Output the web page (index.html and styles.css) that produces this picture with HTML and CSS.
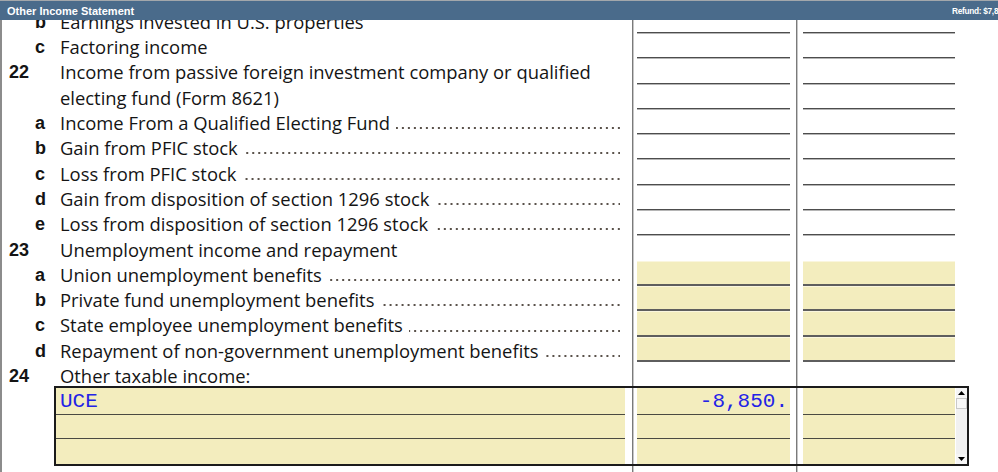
FILE: index.html
```html
<!DOCTYPE html>
<html>
<head>
<meta charset="utf-8">
<title>Other Income Statement</title>
<link rel="stylesheet" href="styles.css">
</head>
<body>
<div class="app">
  <div class="titlebar">
    <span class="title">Other Income Statement</span>
    <span class="refund">Refund: $7,8</span>
  </div>
  <div class="sheet">
    <div class="rows">
      <div class="row">
        <div class="lbl"><span class="num"></span><span class="let">b</span><span class="desc"><span>Earnings invested in U.S. properties</span></span></div>
        <div class="fld"></div><div class="fld fld2"></div>
      </div>
      <div class="row">
        <div class="lbl"><span class="num"></span><span class="let">c</span><span class="desc"><span>Factoring income</span></span></div>
        <div class="fld"></div><div class="fld fld2"></div>
      </div>
      <div class="row">
        <div class="lbl"><span class="num">22</span><span class="let"></span><span class="desc"><span>Income from passive foreign investment company or qualified</span></span></div>
        <div class="fld"></div><div class="fld fld2"></div>
      </div>
      <div class="row">
        <div class="lbl"><span class="num"></span><span class="let"></span><span class="desc"><span>electing fund (Form 8621)</span></span></div>
        <div class="fld"></div><div class="fld fld2"></div>
      </div>
      <div class="row">
        <div class="lbl"><span class="num"></span><span class="let">a</span><span class="desc"><span>Income From a Qualified Electing Fund</span><i class="leader"></i></span></div>
        <div class="fld"></div><div class="fld fld2"></div>
      </div>
      <div class="row">
        <div class="lbl"><span class="num"></span><span class="let">b</span><span class="desc"><span>Gain from PFIC stock</span><i class="leader"></i></span></div>
        <div class="fld"></div><div class="fld fld2"></div>
      </div>
      <div class="row">
        <div class="lbl"><span class="num"></span><span class="let">c</span><span class="desc"><span>Loss from PFIC stock</span><i class="leader"></i></span></div>
        <div class="fld"></div><div class="fld fld2"></div>
      </div>
      <div class="row">
        <div class="lbl"><span class="num"></span><span class="let">d</span><span class="desc"><span>Gain from disposition of section 1296 stock</span><i class="leader"></i></span></div>
        <div class="fld"></div><div class="fld fld2"></div>
      </div>
      <div class="row">
        <div class="lbl"><span class="num"></span><span class="let">e</span><span class="desc"><span>Loss from disposition of section 1296 stock</span><i class="leader"></i></span></div>
        <div class="fld"></div><div class="fld fld2"></div>
      </div>
      <div class="row">
        <div class="lbl"><span class="num">23</span><span class="let"></span><span class="desc"><span>Unemployment income and repayment</span></span></div>
      </div>
      <div class="row">
        <div class="lbl"><span class="num"></span><span class="let">a</span><span class="desc"><span>Union unemployment benefits</span><i class="leader"></i></span></div>
        <div class="fld input"></div><div class="fld fld2 input"></div>
      </div>
      <div class="row">
        <div class="lbl"><span class="num"></span><span class="let">b</span><span class="desc"><span>Private fund unemployment benefits</span><i class="leader"></i></span></div>
        <div class="fld input"></div><div class="fld fld2 input"></div>
      </div>
      <div class="row">
        <div class="lbl"><span class="num"></span><span class="let">c</span><span class="desc"><span>State employee unemployment benefits</span><i class="leader"></i></span></div>
        <div class="fld input"></div><div class="fld fld2 input"></div>
      </div>
      <div class="row">
        <div class="lbl"><span class="num"></span><span class="let">d</span><span class="desc"><span>Repayment of non-government unemployment benefits</span><i class="leader"></i></span></div>
        <div class="fld input"></div><div class="fld fld2 input"></div>
      </div>
      <div class="row">
        <div class="lbl"><span class="num">24</span><span class="let"></span><span class="desc"><span>Other taxable income:</span></span></div>
      </div>
    </div>

    <div class="box">
      <div class="bc c1 ln"><span class="val">UCE</span></div>
      <div class="bc c2 ln amt"><span class="val">-8,850.</span></div>
      <div class="bc c3 ln"></div>
      <div class="bc c1 ln"></div>
      <div class="bc c2 ln"></div>
      <div class="bc c3 ln"></div>
      <div class="bc c1"></div>
      <div class="bc c2"></div>
      <div class="bc c3"></div>
      <div class="scroll">
        <div class="sbtn"><svg width="7" height="4" viewBox="0 0 7 4"><path d="M3.5 0L7 4H0z" fill="#000"/></svg></div>
        <div class="thumb"></div>
        <div class="track"></div>
        <div class="sbtn"><svg width="7" height="4" viewBox="0 0 7 4"><path d="M0 0H7L3.5 4z" fill="#000"/></svg></div>
      </div>
    </div>
  </div>
</div>
</body>
</html>
```
FILE: styles.css
```css
html, body {
  margin: 0;
  padding: 0;
  background: #fff;
}

.app {
  width: 998px;
  height: 472px;
  overflow: hidden;
  display: flex;
  flex-direction: column;
}

.titlebar {
  flex: none;
  height: 20px;
  box-sizing: border-box;
  border-top: 1px solid #a3a7ab;
  background: #4a6b8b;
  color: #fff;
  display: flex;
  align-items: center;
  padding-left: 7px;
  overflow: hidden;
  font-family: "Liberation Sans", Arial, sans-serif;
  font-weight: bold;
}

.title {
  font-size: 11px;
}

.refund {
  flex: none;
  margin-left: auto;
  width: 46px;
  font-size: 8.3px;
  letter-spacing: -0.3px;
  white-space: nowrap;
  padding-top: 1px;
}

.sheet {
  flex: 1;
  overflow: hidden;
  background:
    linear-gradient(#8c8c8c, #8c8c8c) 0 0 / 2px 100% no-repeat,
    linear-gradient(#7a7a7a, #7a7a7a) 632px 0 / 1px 100% no-repeat,
    linear-gradient(#c6c6c6, #c6c6c6) 633px 0 / 1px 100% no-repeat,
    linear-gradient(#7a7a7a, #7a7a7a) 796px 0 / 1px 100% no-repeat,
    linear-gradient(#c6c6c6, #c6c6c6) 797px 0 / 1px 100% no-repeat,
    #fff;
}

.rows {
  margin-top: -12.3px;
}

.row {
  display: flex;
  height: 25.3px;
}

.lbl {
  width: 637px;
  flex: none;
  display: flex;
  align-items: stretch;
  box-sizing: border-box;
  padding-right: 17px;
  padding-top: 2.2px;
  line-height: 24px;
  color: #141414;
}

.num {
  width: 35px;
  flex: none;
  box-sizing: border-box;
  padding-left: 9px;
  font: bold 18px/24px "Liberation Sans", Arial, sans-serif;
}

.let {
  width: 25px;
  flex: none;
  font: bold 18px/24px "Liberation Sans", Arial, sans-serif;
}

.desc {
  flex: 1;
  display: flex;
  min-width: 0;
  white-space: nowrap;
  font-family: "Open Sans", "Liberation Sans", sans-serif;
  font-size: 18.4px;
}

.leader {
  flex: 1;
  margin-left: 6px;
  background: linear-gradient(to right, #5a524b 0 2px, rgba(0,0,0,0) 2px) right 2px bottom 5px / 6px 2px repeat-x;
}

.fld {
  width: 153px;
  flex: none;
  box-sizing: border-box;
  border-bottom: 1px solid #4d4d4d;
  box-shadow: 0 1px 0 #b5b5b5;
}

.fld2 {
  width: 152px;
  margin-left: 13px;
}

.fld.input {
  background: #f3edbe;
  border-bottom: 2px solid #5e5e5e;
  box-shadow: inset 0 1px 0 #faf6de;
}

.box {
  margin: -1.5px 0 0 54px;
  width: 915px;
  height: 80px;
  box-sizing: border-box;
  border: 2px solid #1b1b1b;
  display: grid;
  grid-template-columns: 569px 12px 153px 13px 152px 1px 11px;
  grid-template-rows: repeat(3, 1fr);
}

.bc {
  background: #f3edbe;
  box-sizing: border-box;
  font-family: "Liberation Mono", "Courier New", monospace;
  font-size: 21px;
  line-height: 24px;
  color: #2323e6;
  padding: 2px 4px 0;
  white-space: nowrap;
}

.bc.ln {
  border-bottom: 1px solid #4a4a42;
}

.c1 { grid-column: 1; }
.c2 { grid-column: 3; }
.c3 { grid-column: 5; }

.amt {
  text-align: right;
  padding-right: 2px;
}

.scroll {
  grid-column: 7;
  grid-row: 1 / span 3;
  display: flex;
  flex-direction: column;
  background: #f1f1f1;
}

.sbtn {
  height: 10px;
  flex: none;
  display: flex;
  align-items: center;
  justify-content: center;
  background: #f6f6f6;
}

.thumb {
  height: 11px;
  flex: none;
  box-sizing: border-box;
  border: 1px solid #c9c9c9;
  background: #f7f7f7;
}

.track {
  flex: 1;
}
```
